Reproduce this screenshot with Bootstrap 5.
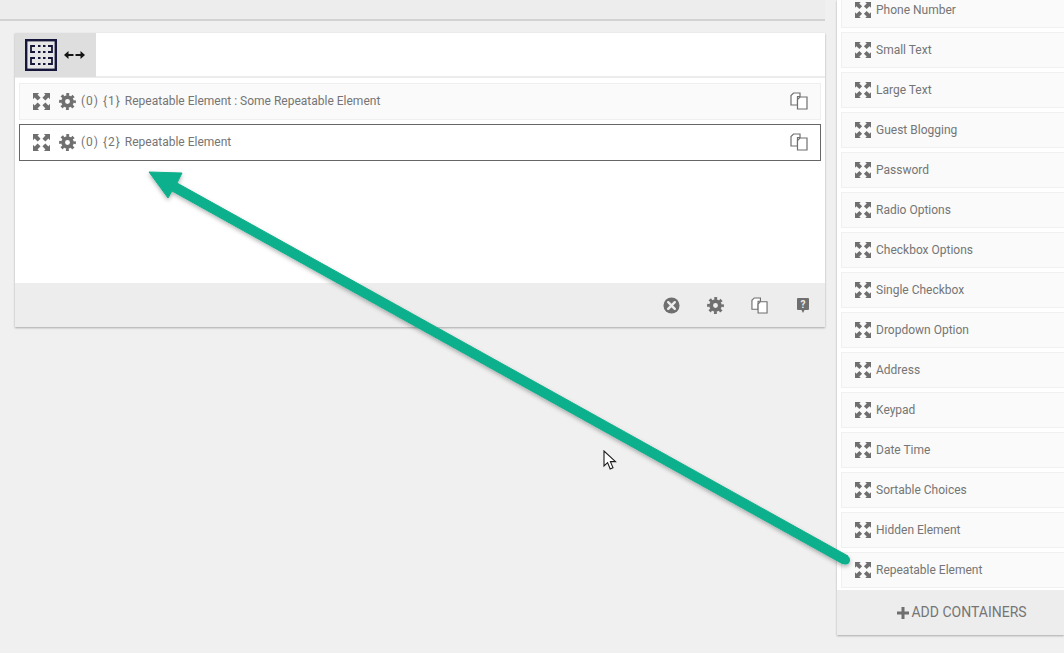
<!DOCTYPE html>
<html lang="en">
<head>
    <meta charset="UTF-8">
    <title>Form Builder</title>
    <link href="https://cdn.jsdelivr.net/npm/bootstrap@5.3.3/dist/css/bootstrap.min.css" rel="stylesheet">
    <script src="https://cdn.jsdelivr.net/npm/bootstrap@5.3.3/dist/js/bootstrap.bundle.min.js"></script>

    <style>
        html, body {
            height: 653px;
            overflow: hidden;
        }

        body {
            background: #f0f0f0;
            font-family: Roboto, "Liberation Sans", sans-serif;
            font-size: 12px;
            color: #757575;
            position: relative;
        }

        .ico {
            fill: #6f6f6f;
            flex: none;
        }

        .builder-main {
            width: 825px;
        }

        .top-strip {
            height: 21px;
            background: #ededed;
            border-bottom: 2px solid #d2d2d2;
        }

        .field-panel {
            margin: 12px 0 0 15px;
            height: 294px;
            background: #fff;
            box-shadow: 0 1px 2px rgba(0, 0, 0, .3);
        }

        .panel-head {
            height: 45px;
            border-bottom: 2px solid #ececec;
        }

        .type-tab {
            width: 81px;
            height: 44px;
            background: #dedede;
            padding-left: 10px;
            gap: 7px;
        }

        .panel-rows {
            padding: 5px 4px 0 4px;
            gap: 4px;
        }

        .field-row {
            height: 37px;
            padding: 0 12px 1px 13px;
            border: 1px solid #efefef;
            background: #fafafa;
        }

        .field-row.is-selected {
            border-color: #666;
            background: #fff;
        }

        .field-row .gear-ico {
            margin: 0 5px 0 9px;
        }

        .row-index {
            letter-spacing: 1px;
        }

        .panel-foot {
            height: 44px;
            background: #ededed;
            padding-right: 16px;
            gap: 27px;
        }

        .help-ico {
            margin-left: 2.500px;
        }

        .palette {
            width: 227px;
            margin-left: 12px;
            height: 635px;
            background: #f6f6f6;
            box-shadow: 0 1px 2px rgba(0, 0, 0, .3);
        }

        .palette-list {
            margin-top: -8px;
            padding-left: 4px;
            gap: 4px;
            background: #fff;
            height: 598px;
            overflow: hidden;
        }

        .palette-item {
            height: 36px;
            flex: none;
            padding-left: 13px;
            gap: 5px;
            background: #fafafa;
            border: 1px solid #f0f0f0;
            border-right: 0;
        }

        .palette-foot {
            height: 45px;
            background: #ededed;
            font-size: 14px;
            gap: 2px;
            padding-left: 23px;
        }

        .big-arrow {
            position: absolute;
            left: 0;
            top: 0;
            pointer-events: none;
        }

        .mouse-pointer {
            position: absolute;
            left: 603px;
            top: 450px;
        }
    </style>
</head>
<body>

<svg width="0" height="0" class="position-absolute">
    <defs>
        <symbol id="i-expand" viewBox="0 0 18 18">
            <path d="M0 0h6.500L4.800 1.700 8 4.900 4.900 8 1.700 4.800 0 6.500zM18 0v6.500l-1.700-1.700L13.100 8 10 4.900l3.200-3.200L11.500 0zM0 18v-6.500l1.700 1.700L4.900 10 8 13.100l-3.200 3.200L6.500 18zM18 18h-6.500l1.700-1.700L10 13.100 13.100 10l3.200 3.200 1.700-1.700z"/>
        </symbol>
        <symbol id="i-gear" viewBox="0 0 18 18">
            <circle cx="9" cy="9" r="4.600" fill="none" stroke="#6f6f6f" stroke-width="4"/>
            <circle cx="9" cy="9" r="7.400" fill="none" stroke="#6f6f6f" stroke-width="3" stroke-dasharray="3 2.810" stroke-dashoffset="1.500"/>
        </symbol>
        <symbol id="i-copy" viewBox="0 0 18 18">
            <path d="M3.500 1H10v3.500H7.500V13H1V3.500z" fill="#fff" stroke="#6f6f6f" stroke-width="1.200"/>
            <path d="M10 5h7v12H7.500V7.500z" fill="#fff" stroke="#6f6f6f" stroke-width="1.200"/>
        </symbol>
        <symbol id="i-close" viewBox="0 0 18 18">
            <circle cx="9" cy="9" r="8.500"/>
            <path d="M5.500 5.500l7 7M12.500 5.500l-7 7" stroke="#ededed" stroke-width="2.600" stroke-linecap="round"/>
        </symbol>
        <symbol id="i-help" viewBox="0 0 12 15">
            <path d="M1 0h10a1 1 0 0 1 1 1v10a1 1 0 0 1-1 1H7.500L6 15 4.500 12H1a1 1 0 0 1-1-1V1a1 1 0 0 1 1-1z"/>
            <text x="6" y="10" text-anchor="middle" font-family="Roboto, sans-serif" font-weight="700" font-size="10" fill="#ededed">?</text>
        </symbol>
    </defs>
</svg>

<div class="d-flex">
    <div class="builder-main">
        <div class="top-strip"></div>

        <div class="field-panel d-flex flex-column">
            <div class="panel-head">
                <div class="type-tab d-flex align-items-center">
                    <svg width="32" height="32" viewBox="0 0 32 32">
                        <rect x="1.200" y="1.200" width="29.600" height="29.600" fill="#e6e6e6" stroke="#16163a" stroke-width="2.400"/>
                        <path d="M10 7H6v6h4M13 7h2.500M18 7h2.500M23 7h4v6h-4M13 13h2.500M18 13h2.500M10 19H6v6h4M13 19h2.500M18 19h2.500M23 19h4v6h-4M13 25h2.500M18 25h2.500" fill="none" stroke="#16163a" stroke-width="1.800"/>
                    </svg>
                    <svg width="21" height="8" viewBox="0 0 21 8">
                        <path d="M0 4l4.500-4V3H9.500v2H4.500v3zM21 4l-4.500-4V3H11.500v2h5v3z" fill="#141414"/>
                    </svg>
                </div>
            </div>

            <div class="panel-rows flex-grow-1 d-flex flex-column">
                <div class="field-row d-flex align-items-center">
                    <svg class="ico" width="17" height="17"><use href="#i-expand"/></svg>
                    <svg class="ico gear-ico" width="17" height="17"><use href="#i-gear"/></svg>
                    <span><span class="row-index">(0) {1} </span>Repeatable Element : Some Repeatable Element</span>
                    <svg class="ico ms-auto" width="18" height="18"><use href="#i-copy"/></svg>
                </div>
                <div class="field-row is-selected d-flex align-items-center">
                    <svg class="ico" width="17" height="17"><use href="#i-expand"/></svg>
                    <svg class="ico gear-ico" width="17" height="17"><use href="#i-gear"/></svg>
                    <span><span class="row-index">(0) {2} </span>Repeatable Element</span>
                    <svg class="ico ms-auto" width="18" height="18"><use href="#i-copy"/></svg>
                </div>
            </div>

            <div class="panel-foot d-flex align-items-center justify-content-end">
                <svg class="ico" width="17" height="17"><use href="#i-close"/></svg>
                <svg class="ico" width="17" height="17"><use href="#i-gear"/></svg>
                <svg class="ico" width="17" height="17"><use href="#i-copy"/></svg>
                <svg class="ico help-ico" width="12" height="15"><use href="#i-help"/></svg>
            </div>
        </div>
    </div>

    <div class="palette">
        <div class="palette-list d-flex flex-column">
            <div class="palette-item d-flex align-items-center"><svg class="ico" width="16" height="16"><use href="#i-expand"/></svg><span>Phone Number</span></div>
            <div class="palette-item d-flex align-items-center"><svg class="ico" width="16" height="16"><use href="#i-expand"/></svg><span>Small Text</span></div>
            <div class="palette-item d-flex align-items-center"><svg class="ico" width="16" height="16"><use href="#i-expand"/></svg><span>Large Text</span></div>
            <div class="palette-item d-flex align-items-center"><svg class="ico" width="16" height="16"><use href="#i-expand"/></svg><span>Guest Blogging</span></div>
            <div class="palette-item d-flex align-items-center"><svg class="ico" width="16" height="16"><use href="#i-expand"/></svg><span>Password</span></div>
            <div class="palette-item d-flex align-items-center"><svg class="ico" width="16" height="16"><use href="#i-expand"/></svg><span>Radio Options</span></div>
            <div class="palette-item d-flex align-items-center"><svg class="ico" width="16" height="16"><use href="#i-expand"/></svg><span>Checkbox Options</span></div>
            <div class="palette-item d-flex align-items-center"><svg class="ico" width="16" height="16"><use href="#i-expand"/></svg><span>Single Checkbox</span></div>
            <div class="palette-item d-flex align-items-center"><svg class="ico" width="16" height="16"><use href="#i-expand"/></svg><span>Dropdown Option</span></div>
            <div class="palette-item d-flex align-items-center"><svg class="ico" width="16" height="16"><use href="#i-expand"/></svg><span>Address</span></div>
            <div class="palette-item d-flex align-items-center"><svg class="ico" width="16" height="16"><use href="#i-expand"/></svg><span>Keypad</span></div>
            <div class="palette-item d-flex align-items-center"><svg class="ico" width="16" height="16"><use href="#i-expand"/></svg><span>Date Time</span></div>
            <div class="palette-item d-flex align-items-center"><svg class="ico" width="16" height="16"><use href="#i-expand"/></svg><span>Sortable Choices</span></div>
            <div class="palette-item d-flex align-items-center"><svg class="ico" width="16" height="16"><use href="#i-expand"/></svg><span>Hidden Element</span></div>
            <div class="palette-item d-flex align-items-center"><svg class="ico" width="16" height="16"><use href="#i-expand"/></svg><span>Repeatable Element</span></div>
        </div>
        <div class="palette-foot d-flex align-items-center justify-content-center">
            <svg class="ico" width="12" height="12" viewBox="0 0 12 12"><path d="M4.500 0h3v4.500H12v3H7.500V12h-3V7.500H0v-3h4.500z"/></svg>
            <span>ADD CONTAINERS</span>
        </div>
    </div>
</div>

<!-- callout arrow drawn over the page -->
<svg class="big-arrow" width="1064" height="653">
    <defs>
        <filter id="arrowShadow" x="-5%" y="-5%" width="110%" height="115%">
            <feDropShadow dx="0" dy="2" stdDeviation="2" flood-color="#000" flood-opacity=".3"/>
        </filter>
    </defs>
    <g filter="url(#arrowShadow)" fill="#10b08c">
        <path d="M149 172L182 173 177 183 848 556 843 564 172 191 168 198z" stroke="#10b08c" stroke-width="1" stroke-linejoin="round"/>
        <circle cx="845.500" cy="560" r="4.600"/>
    </g>
</svg>

<svg class="mouse-pointer" width="14" height="21" viewBox="0 0 14 21">
    <path d="M1 1v15l3.600-3.400 2.600 6.400 2.800-1.200-2.600-6.200H12.500z" fill="#fff" stroke="#1c1c1c" stroke-width="1.100"/>
</svg>

</body>
</html>
